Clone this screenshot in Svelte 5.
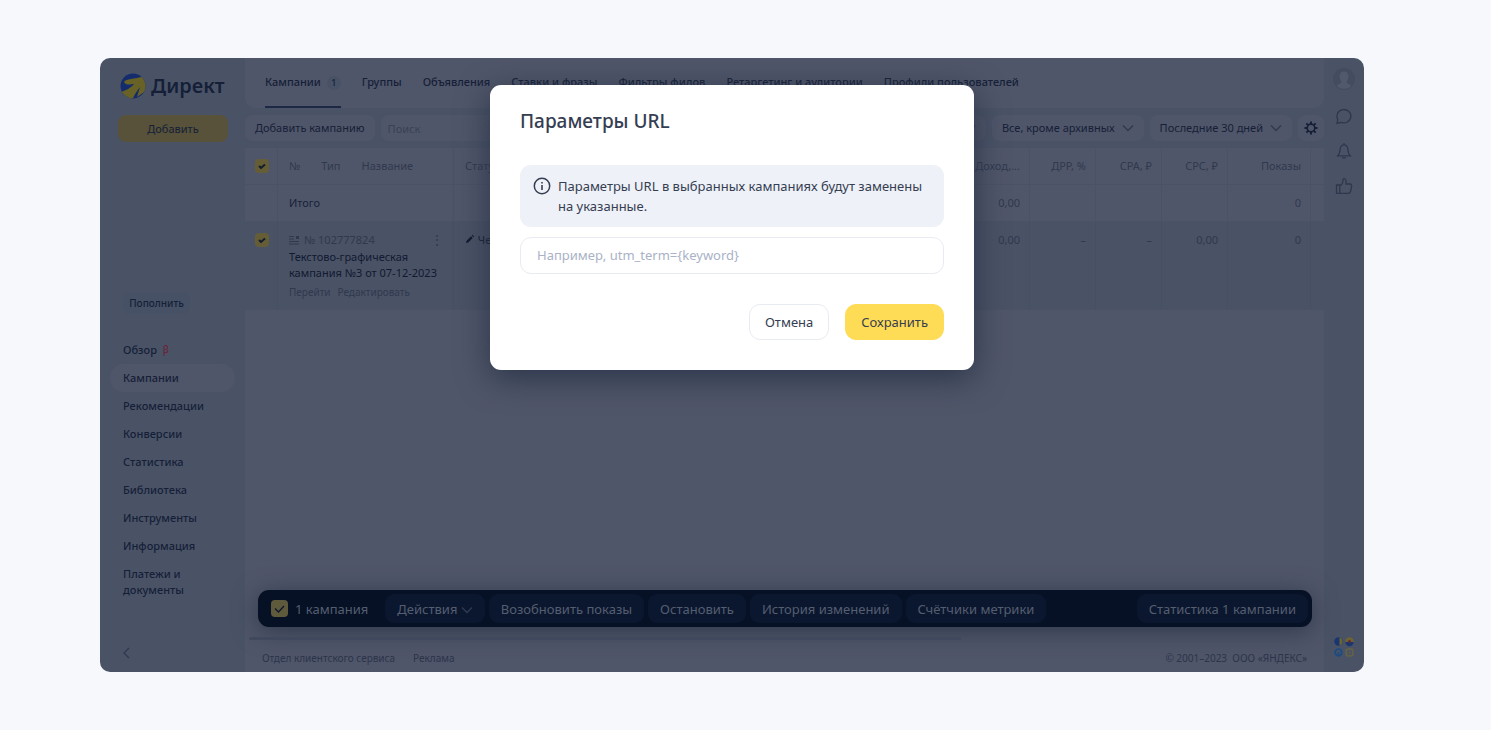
<script>
  const tabs = ['Группы', 'Объявления', 'Ставки и фразы', 'Фильтры фидов', 'Ретаргетинг и аудитории', 'Профили пользователей'];
  const menu = ['Рекомендации', 'Конверсии', 'Статистика', 'Библиотека', 'Инструменты', 'Информация', 'Платежи и документы'];
  const actions = ['Возобновить показы', 'Остановить', 'История изменений', 'Счётчики метрики'];

  let open = $state(true);
  let params = $state('');
  let search = $state('');
  let all = $state(true);
  let picked = $state(true);
</script>

{#snippet chevron()}
  <svg class="chevron" viewBox="0 0 12 8" width="12" height="8" aria-hidden="true">
    <path d="M1 1.5 6 6.5 11 1.5" fill="none" stroke="currentColor" stroke-width="1.4" />
  </svg>
{/snippet}

<div class="app">
  <aside class="sidebar">
    <a class="logo" href="#home">
      <svg viewBox="0 0 26 26" width="26" height="26" aria-hidden="true">
        <defs><clipPath id="disc"><circle cx="13" cy="13" r="12.5" /></clipPath></defs>
        <g clip-path="url(#disc)">
          <rect width="26" height="26" fill="#142c6c" />
          <path d="M4 9C6 5 14 7 24 3H27V17L17 24 20 14C16 19 14 23 12 27H6L0 19C5 18 11 15 14 11C11 11 6 13 4 9Z" fill="#686227" />
        </g>
      </svg>
      <span>Директ</span>
    </a>
    <button class="add" type="button">Добавить</button>
    <button class="refill" type="button">Пополнить</button>
    <nav class="menu">
      <a href="#overview">Обзор <sup>β</sup></a>
      <a class="current" href="#campaigns">Кампании</a>
      {#each menu as item}
        <a href="#menu">{item}</a>
      {/each}
    </nav>
    <button class="collapse" type="button" aria-label="Свернуть">
      <svg viewBox="0 0 8 12" width="8" height="12"><path d="M7 1 2 6 7 11" fill="none" stroke="currentColor" stroke-width="1.4" /></svg>
    </button>
  </aside>

  <main>
    <div class="top">
      <nav class="tabs">
        <a class="active" href="#campaigns">Кампании <span class="count">1</span></a>
        {#each tabs as tab}
          <a href="#tab">{tab}</a>
        {/each}
      </nav>

      <div class="toolbar">
        <button type="button">Добавить кампанию</button>
        <input class="search" type="text" placeholder="Поиск" aria-label="Поиск" bind:value={search} />
        <button class="drop" type="button" aria-label="Фильтр">{@render chevron()}</button>
        <button class="drop" type="button">Все, кроме архивных {@render chevron()}</button>
        <button class="drop" type="button">Последние 30 дней {@render chevron()}</button>
        <button class="gear" type="button" aria-label="Настройки">
          <svg viewBox="0 0 14 14" width="14" height="14">
            <circle cx="7" cy="7" r="3.8" fill="none" stroke="currentColor" stroke-width="1.7" />
            <path d="M7 .5V3M7 11v2.500M.5 7H3M11 7h2.500M2.400 2.400 4.200 4.200M9.800 9.800l1.800 1.800M2.400 11.600l1.800-1.800M9.800 4.200l1.800-1.800" stroke="currentColor" stroke-width="2" />
          </svg>
        </button>
      </div>
    </div>

    <table>
      <colgroup>
        <col class="c-check" /><col class="c-name" /><col /><col class="c-income" />
        <col class="c-num" /><col class="c-num" /><col class="c-num" /><col class="c-shows" /><col class="c-end" />
      </colgroup>
      <thead>
        <tr>
          <th><input type="checkbox" aria-label="Выбрать все" bind:checked={all} /></th>
          <th><span class="heads"><span>№</span><span>Тип</span><span>Название</span></span></th>
          <th>Статус</th>
          <th class="num">Доход,...</th>
          <th class="num">ДРР, %</th>
          <th class="num">CPA, ₽</th>
          <th class="num">CPC, ₽</th>
          <th class="num">Показы</th>
          <th></th>
        </tr>
      </thead>
      <tbody>
        <tr class="total">
          <td></td><td>Итого</td><td></td>
          <td class="num">0,00</td><td></td><td></td><td></td><td class="num">0</td><td></td>
        </tr>
        <tr class="row">
          <td><input type="checkbox" aria-label="Выбрать кампанию" bind:checked={picked} /></td>
          <td>
            <div class="number">
              <svg viewBox="0 0 10 10" width="10" height="10" aria-hidden="true">
                <path d="M0 1.5H5M0 4H5M0 6.5H10M0 9H10" stroke="currentColor" /><path d="M7 1H10V4H7Z" fill="currentColor" />
              </svg>
              № 102777824
              <button class="dots" type="button" aria-label="Ещё">⋮</button>
            </div>
            <a class="title" href="#campaign">Текстово-графическая кампания №3 от 07-12-2023</a>
            <div class="links"><a href="#go">Перейти</a><a href="#edit">Редактировать</a></div>
          </td>
          <td class="status">
            <svg viewBox="0 0 10 10" width="10" height="10" aria-hidden="true"><path d="M1 9 1.600 6.700 6 2.300 7.700 4 3.300 8.400ZM6.700 1.600 7.500 .8 9.200 2.500 8.400 3.300Z" fill="currentColor" /></svg>
            Черновик
          </td>
          <td class="num">0,00</td><td class="num">–</td><td class="num">–</td><td class="num">0,00</td><td class="num">0</td><td></td>
        </tr>
      </tbody>
    </table>

    <div class="actions">
      <label><input class="big" type="checkbox" bind:checked={picked} />1 кампания</label>
      <button type="button">Действия {@render chevron()}</button>
      {#each actions as action}
        <button type="button">{action}</button>
      {/each}
      <button class="stats" type="button">Статистика 1 кампании</button>
    </div>

    <div class="scroll"></div>
    <footer>
      <a href="#support">Отдел клиентского сервиса</a>
      <a href="#ads">Реклама</a>
      <span>© 2001–2023&nbsp; ООО «ЯНДЕКС»</span>
    </footer>
  </main>

  <aside class="rail">
    <svg viewBox="0 0 22 22" width="22" height="22" aria-hidden="true">
      <circle cx="11" cy="11" r="11" fill="#444c60" />
      <path d="M11 3.5c3 0 4.500 2 4.500 5 0 2-1 4-2 5 0 2 3 2.500 5 4.500a11 11 0 0 1-15 0c2-2 5-2.500 5-4.500-1-1-2-3-2-5 0-3 1.500-5 4.500-5Z" fill="#51596c" />
    </svg>
    <svg viewBox="0 0 18 18" width="18" height="18" aria-hidden="true"><path d="M2 16.300 2.800 12.500A7 6.700 0 1 1 6 15.300Z" /></svg>
    <svg viewBox="0 0 18 18" width="18" height="18" aria-hidden="true"><path d="M2.800 13.800c2-2 2.200-4 2.400-7C5.500 4 7 2.800 9 2.800s3.500 1.200 3.800 4c.2 3 .4 5 2.400 7ZM9 2.800V1M7 15.800h4" /></svg>
    <svg viewBox="0 0 18 18" width="18" height="18" aria-hidden="true"><path d="M1.500 8H4.800V16.300H1.500ZM4.800 9C7 8 8 6 8 2.500 8.500 1 11 1.500 11 4V7H15C16.500 7 17 8.500 16.500 10L15.500 14.500C15.200 16 14.500 16.300 13 16.300H4.800" /></svg>
    <svg class="services" viewBox="0 0 20 20" width="20" height="20" aria-hidden="true">
      <circle cx="4.500" cy="4.500" r="4.200" fill="#1a3671" /><path d="M5.500 .5a4.200 4.200 0 0 1 0 8Z" fill="#6c6531" />
      <circle cx="15.500" cy="4.500" r="4.200" fill="#6c6531" /><path d="M11.300 5h8.400a4.200 4.200 0 0 1-8.400 0Z" fill="#1a3671" /><circle cx="15.500" cy="4.500" r="1.500" fill="#662838" />
      <circle cx="4.500" cy="15.500" r="3.300" fill="none" stroke="#1c4b80" stroke-width="1.800" /><path d="M4.500 15V18" stroke="#1c4b80" stroke-width="1.500" />
      <rect x="12.200" y="12.200" width="6.600" height="6.600" rx="1.500" fill="none" stroke="#636048" stroke-width="1.800" /><path d="M14.500 15.500h2" stroke="#636048" />
    </svg>
  </aside>

  {#if open}
    <div class="overlay">
      <form class="modal" role="dialog" aria-labelledby="modal-title" onsubmit={(e) => e.preventDefault()}>
        <h2 id="modal-title">Параметры URL</h2>
        <div class="notice">
          <svg viewBox="0 0 18 18" width="18" height="18" aria-hidden="true">
            <circle cx="9" cy="9" r="7.7" fill="none" stroke="currentColor" stroke-width="1.5" />
            <path d="M9 8V13M9 5V6.500" stroke="currentColor" stroke-width="1.6" />
          </svg>
          <p>Параметры URL в выбранных кампаниях будут заменены на указанные.</p>
        </div>
        <input class="params" type="text" placeholder={'Например, utm_term={keyword}'} aria-label="Параметры URL" bind:value={params} />
        <div class="buttons">
          <button type="button" onclick={() => (open = false)}>Отмена</button>
          <button class="save" type="submit">Сохранить</button>
        </div>
      </form>
    </div>
  {/if}
</div>

<style>
  :global(body) {
    background: #f6f8fc;
  }

  * {
    box-sizing: border-box;
  }

  .app {
    position: relative;
    display: grid;
    grid-template-columns: 145px 1fr 40px;
    min-height: calc(100vh - 116px);
    margin: 58px 127px 58px 100px;
    overflow: hidden;
    border-radius: 10px;
    background: #4a5366;
    color: #152038;
    font: 11px/16px "Noto Sans", sans-serif;
  }

  button, input {
    margin: 0;
    border: 0;
    font: inherit;
    color: inherit;
  }

  button {
    padding: 0;
    background: none;
    white-space: nowrap;
    cursor: pointer;
  }

  a {
    color: inherit;
    text-decoration: none;
  }

  .sidebar {
    display: flex;
    flex-direction: column;
    align-items: flex-start;
    padding: 15px 10px 13px;
  }

  .logo {
    display: flex;
    align-items: center;
    gap: 5px;
    height: 26px;
    margin-left: 10px;
    font-size: 20px;
    font-weight: 600;
  }

  .add {
    width: 110px;
    height: 27px;
    margin: 16px 0 0 8px;
    border-radius: 8px;
    background: #575239;
  }

  .refill {
    width: 67px;
    height: 22px;
    margin: 150px 0 0 13px;
    border-radius: 8px;
    background: #465165;
    font-size: 10px;
    font-weight: 500;
  }

  .menu {
    display: flex;
    flex-direction: column;
    align-self: stretch;
    margin-top: 22px;
    font-weight: 500;
  }

  .menu a {
    padding: 6px 40px 6px 13px;
    border-radius: 14px;
    white-space: nowrap;
  }

  .menu a:last-child {
    white-space: normal;
  }

  .menu .current {
    background: #505669;
  }

  sup {
    margin-left: 3px;
    color: #6b2338;
    font-size: 10px;
    line-height: 1;
    vertical-align: 1px;
  }

  .collapse {
    display: flex;
    margin: auto 0 0 12px;
    color: #2f3950;
  }

  main {
    display: flex;
    flex-direction: column;
    min-width: 0;
    background: #505669;
  }

  .top {
    background: #4a5366;
  }

  .tabs {
    display: flex;
    gap: 21px;
    height: 50px;
    padding: 0 20px;
    border-radius: 0 0 10px 10px;
    background: #505669;
    font-weight: 500;
    white-space: nowrap;
  }

  .tabs a {
    padding-top: 16px;
  }

  .tabs .active {
    border-bottom: 2px solid #1d2944;
  }

  .count {
    display: inline-block;
    width: 14px;
    height: 14px;
    margin-left: 3px;
    border-radius: 50%;
    background: #485266;
    font-size: 9px;
    line-height: 14px;
    text-align: center;
  }

  .toolbar {
    display: flex;
    gap: 6px;
    padding: 7px 0;
  }

  .toolbar > * {
    height: 26px;
    border-radius: 8px;
    background: #505669;
  }

  .toolbar button {
    padding: 0 10px;
  }

  .toolbar .search {
    flex: 1;
    min-width: 0;
    padding: 0 7px;
  }

  .toolbar .drop {
    display: flex;
    align-items: center;
    gap: 7px;
  }

  .toolbar .gear {
    display: flex;
    align-items: center;
    justify-content: center;
    width: 26px;
    padding: 0;
  }

  .search::placeholder {
    color: #384256;
    opacity: 1;
  }

  .chevron {
    color: #303a50;
  }

  table {
    width: 100%;
    table-layout: fixed;
    border-collapse: separate;
    border-spacing: 0;
  }

  .c-check { width: 33px; }
  .c-name { width: 176px; }
  .c-income, .c-num { width: 66px; }
  .c-shows { width: 83px; }
  .c-end { width: 13px; }

  th, td {
    height: 37px;
    padding: 10px 9px 8px 11px;
    border-right: 1px solid #4a5266;
    border-bottom: 1px solid #4a5266;
    color: #2f394f;
    font-weight: 400;
    text-align: left;
    vertical-align: top;
    white-space: nowrap;
  }

  th:first-child, td:first-child {
    padding: 11px 8px 8px 10px;
  }

  th:last-child, td:last-child {
    padding: 0;
    border-right: 0;
  }

  .num {
    text-align: right;
  }

  .total td:nth-child(2) {
    color: #17223a;
  }

  .row td {
    height: 88px;
    border-right-color: #465063;
    background: #4a5265;
  }

  .heads {
    display: flex;
    gap: 21px;
  }

  input[type="checkbox"] {
    display: block;
    width: 14px;
    height: 14px;
    appearance: none;
    border-radius: 4px;
    background: #4a5266;
  }

  input[type="checkbox"]:checked {
    background: #655d36 url("data:image/svg+xml,%3Csvg xmlns='http://www.w3.org/2000/svg' viewBox='0 0 14 14'%3E%3Cpath d='M4 7 6 9 10 5.500' fill='none' stroke='%23141c2c' stroke-width='2'/%3E%3C/svg%3E");
  }

  .number {
    display: flex;
    align-items: center;
    gap: 5px;
  }

  .dots {
    margin-left: auto;
    font-size: 14px;
    line-height: 16px;
  }

  .title {
    display: block;
    margin-top: 1px;
    color: #101a32;
    white-space: normal;
  }

  .links {
    display: flex;
    gap: 7px;
    margin-top: 4px;
    font-size: 10px;
    line-height: 14px;
  }

  .row .status {
    color: #101a32;
  }

  .actions {
    display: flex;
    align-items: center;
    gap: 4px;
    height: 37px;
    margin: auto 12px 0 13px;
    padding: 0 4px 0 13px;
    border-radius: 11px;
    background: #061125;
    box-shadow: 0 4px 24px #2f384c;
    color: #555e70;
    font-size: 13px;
  }

  .actions label {
    display: flex;
    align-items: center;
    gap: 7px;
    margin-right: 13px;
    white-space: nowrap;
  }

  .actions button {
    height: 29px;
    padding: 0 12px;
    border-radius: 9px;
    background: #0b172f;
  }

  .actions .stats {
    margin-left: auto;
  }

  input.big[type="checkbox"] {
    width: 17px;
    height: 17px;
  }

  input.big[type="checkbox"]:checked {
    background: #605a3d url("data:image/svg+xml,%3Csvg xmlns='http://www.w3.org/2000/svg' viewBox='0 0 17 17'%3E%3Cpath d='M4 8.500 7.500 12 13 6' fill='none' stroke='%23101a2c' stroke-width='1.500'/%3E%3C/svg%3E");
  }

  .scroll {
    width: 66%;
    height: 3px;
    margin: 10px 0 0 4px;
    border-radius: 2px;
    background: #3f485c;
  }

  footer {
    display: flex;
    gap: 18px;
    padding: 10px 17px 6px;
    color: #2a344b;
    font-size: 10px;
  }

  footer span {
    margin-left: auto;
  }

  .rail {
    display: flex;
    flex-direction: column;
    align-items: center;
    gap: 17px;
    padding: 10px 0 15px;
    fill: none;
    stroke: #2d374e;
    stroke-width: 1.3;
  }

  .rail svg:first-child, .services {
    stroke: none;
  }

  .services {
    margin-top: auto;
  }

  .overlay {
    position: absolute;
    inset: 0;
    display: flex;
    align-items: flex-start;
    justify-content: center;
    padding-top: 27px;
  }

  .modal {
    width: 484px;
    padding: 24px 30px 30px;
    border-radius: 11px;
    background: #fff;
    box-shadow: 0 8px 32px #2a3449;
    color: #353e52;
    font-size: 13px;
    line-height: 20px;
  }

  h2 {
    margin: 0;
    font-size: 19px;
    font-weight: 500;
    line-height: 24px;
  }

  .notice {
    display: flex;
    gap: 7px;
    margin: 32px 0 10px;
    padding: 11px 13px;
    border-radius: 11px;
    background: #eef1f7;
  }

  .notice svg {
    flex: none;
    margin-top: 1px;
  }

  .notice p {
    margin: 0;
  }

  .params {
    display: block;
    width: 100%;
    height: 37px;
    padding: 0 16px 2px;
    border: 1px solid #e9ebf3;
    border-radius: 11px;
  }

  .params::placeholder {
    color: #a9b2c6;
    opacity: 1;
  }

  .buttons {
    display: flex;
    justify-content: flex-end;
    gap: 16px;
    margin-top: 30px;
  }

  .buttons button {
    height: 36px;
    padding: 0 15px;
    border: 1px solid #e9ebf3;
    border-radius: 11px;
  }

  .buttons .save {
    border-color: #ffdc55;
    background: #ffdc55;
  }
</style>
